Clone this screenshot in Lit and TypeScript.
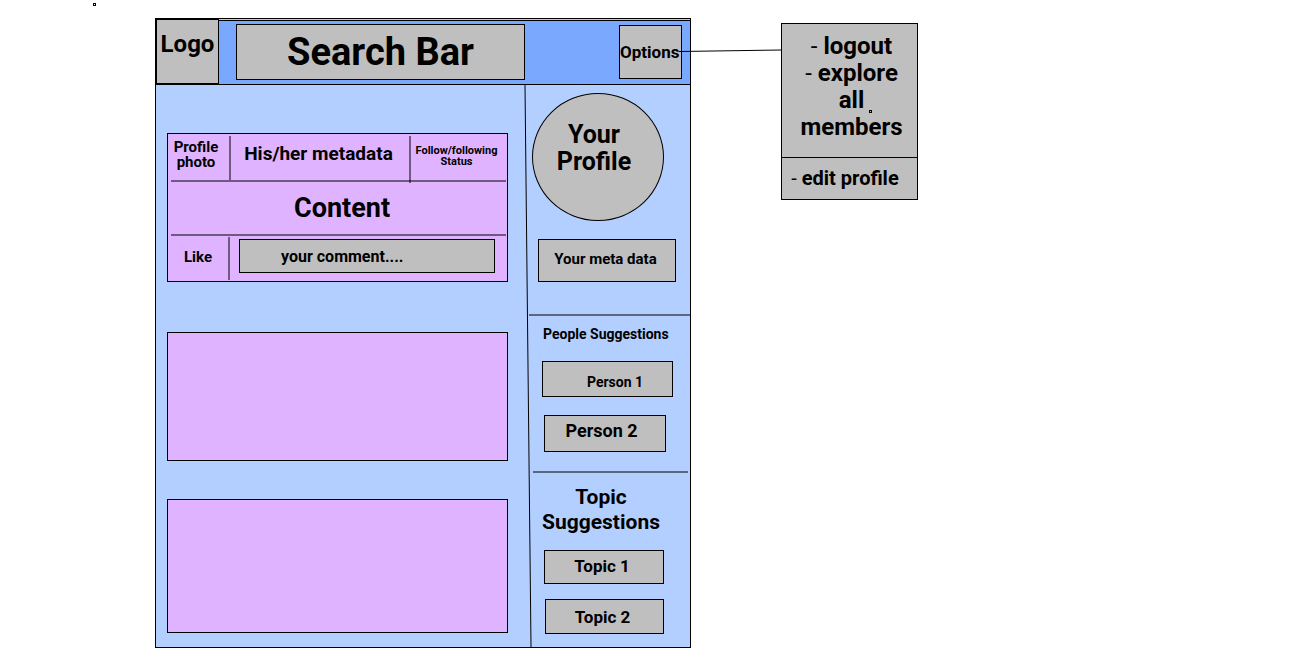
import { LitElement, html, css } from "lit";
import { customElement } from "lit/decorators.js";

const shared = css`
  *, *::before, *::after { box-sizing: border-box; }
  button, input {
    font: inherit;
    color: inherit;
    margin: 0;
    padding: 0;
    border: 1px solid #000;
    border-radius: 0;
    background: #bfbfbf;
    text-align: center;
    min-width: 0;
    outline-offset: 2px;
  }
  button { cursor: pointer; }
  h2, p { margin: 0; padding: 0; font-weight: inherit; }
`;

@customElement("post-card")
class PostCard extends LitElement {
  static styles = [shared, css`
    :host { display: block; }
    .card { border: 1px solid #000; background: #dfb3ff; padding: 2px 1px 1px 3px; }
    .meta {
      display: grid; grid-template-rows: 44px;
      grid-template-columns: minmax(0, 58fr) 2px minmax(0, 178fr) 2px minmax(0, 95fr);
    }
    .bar { background: rgba(0, 0, 0, 0.5); }
    .bar.long { height: 47px; }
    .rule { height: 2px; background: rgba(0, 0, 0, 0.5); }
    .photo { font-size: 15px; line-height: 15px; text-align: center; padding: 4px 8px 0 0; }
    .name { font-size: 19px; line-height: 36px; text-align: center; white-space: nowrap; padding-right: 3px; }
    .status { font-size: 11px; line-height: 11px; text-align: center; padding: 9px 4px 0 0; }
    .content { font-size: 27px; line-height: 52px; text-align: center; padding-left: 7px; }
    .actions { display: grid; grid-template-columns: minmax(0, 57fr) 2px minmax(0, 276fr); height: 44px; padding-top: 1px; }
    .like { border: 0; background: none; font-size: 15px; line-height: 20px; padding: 0 3px 3px 0; }
    .comment { font-size: 16px; height: 34px; margin: 2px 11px 0 9px; text-align: left; padding-left: 41px; }
  `];

  render() {
    return html`
      <article class="card">
        <div class="meta">
          <p class="photo">Profile photo</p>
          <span class="bar"></span>
          <p class="name">His/her metadata</p>
          <span class="bar long"></span>
          <p class="status">Follow/following Status</p>
        </div>
        <div class="rule"></div>
        <p class="content">Content</p>
        <div class="rule"></div>
        <div class="actions">
          <button class="like">Like</button>
          <span class="bar"></span>
          <input class="comment" aria-label="Comment" value="your comment...." />
        </div>
      </article>
    `;
  }
}

@customElement("side-panel")
class SidePanel extends LitElement {
  static styles = [shared, css`
    :host { display: block; padding: 8px 0 13px; }
    .side { display: flex; flex-direction: column; }
    .avatar {
      aspect-ratio: 33 / 32; margin-right: 26px; border-radius: 50%;
      font-size: 25px; line-height: 27px; padding: 0 24px 18px 16px;
    }
    .data { height: 43px; margin: 18px 14px 0 6px; font-size: 15px; padding: 0 3px 4px 0; }
    .rule { height: 2px; background: rgba(0, 0, 0, 0.5); }
    .rule.first { margin: 32px 0 8px -3px; }
    .rule.second { margin: 19px 2px 12px 1px; }
    .people { font-size: 14px; line-height: 20px; text-align: center; margin: 0 24px 17px 11px; white-space: nowrap; }
    .topics { font-size: 21px; line-height: 25px; text-align: center; margin: 0 30px 15px 10px; }
    .one { height: 36px; margin: 0 17px 18px 10px; font-size: 14px; padding: 6px 0 0 15px; }
    .two { height: 37px; margin: 0 24px 0 12px; font-size: 18px; padding: 0 7px 6px 0; }
    .topic { height: 34px; margin: 0 26px 15px 12px; font-size: 17px; padding: 0 4px 2px 0; }
    .topic.last { height: 35px; margin-bottom: 0; margin-left: 13px; padding-bottom: 0; }
  `];

  render() {
    return html`
      <aside class="side">
        <button class="avatar">Your Profile</button>
        <button class="data">Your meta data</button>
        <div class="rule first"></div>
        <h2 class="people">People Suggestions</h2>
        <button class="one">Person 1</button>
        <button class="two">Person 2</button>
        <div class="rule second"></div>
        <h2 class="topics">Topic Suggestions</h2>
        <button class="topic">Topic 1</button>
        <button class="topic last">Topic 2</button>
      </aside>
    `;
  }
}

@customElement("options-menu")
class OptionsMenu extends LitElement {
  static styles = [shared, css`
    :host { display: block; position: relative; }
    .menu { border: 1px solid #000; background: #bfbfbf; }
    .item { display: block; width: 100%; border: 0; font-size: 24px; line-height: 27px; padding: 0 12px 0 16px; }
    .group { padding: 9px 0 16px; border-bottom: 1px solid #000; }
    .edit { font-size: 20px; line-height: 41px; padding: 0 9px 0 0; white-space: nowrap; }
    .dash { font-weight: 400; }
    .handle { position: absolute; left: 88px; top: 87px; width: 3px; height: 3px; border: 1px solid #000; }
  `];

  render() {
    return html`
      <nav class="menu" aria-label="Options">
        <div class="group">
          <button class="item"><span class="dash">-</span> logout</button>
          <button class="item"><span class="dash">-</span> explore all members</button>
        </div>
        <button class="item edit"><span class="dash">-</span> edit profile</button>
      </nav>
      <span class="handle"></span>
    `;
  }
}

@customElement("app-root")
class AppRoot extends LitElement {
  static styles = [shared, css`
    :host {
      display: grid;
      position: relative;
      grid-template-columns: minmax(0, 155fr) minmax(0, 536fr) minmax(0, 90fr) minmax(0, 137fr) minmax(0, 379fr);
      align-items: start;
      padding: 18px 0 21px;
      background: #fff;
      color: #000;
      font-family: Roboto, "Liberation Sans", sans-serif;
      font-weight: 700;
    }
    .handle { position: absolute; left: 93px; top: 3px; width: 3px; height: 3px; border: 1px solid #000; }
    .board { grid-column: 2; border: 1px solid #000; background: #b3cfff; }
    .header { display: grid; grid-template-columns: 63px minmax(0, 1fr); border-bottom: 1px solid #000; }
    .logo {
      height: 65px; border: 1px solid #000; background: #bfbfbf; color: inherit;
      font-size: 24px; line-height: 48px; text-align: center; text-decoration: none;
    }
    .tools {
      display: grid; grid-template-columns: minmax(0, 289fr) minmax(0, 94fr) minmax(0, 63fr); align-items: center;
      margin-top: 1px; border-top: 1px solid #000; padding: 0 8px 1px 17px; background: #7ba8ff;
    }
    .search { height: 56px; font-size: 38px; width: 100%; }
    .options { grid-column: 3; height: 54px; font-size: 17px; padding-right: 2px; }
    .body { display: grid; grid-template-columns: minmax(0, 369fr) 7px minmax(0, 158fr); }
    .feed { display: flex; flex-direction: column; padding: 48px 17px 14px 11px; }
    .blank { border: 1px solid #000; background: #dfb3ff; }
    .blank.upper { height: 129px; margin: 50px 0 38px; }
    .blank.lower { height: 134px; }
    .divider { width: 7px; height: 100%; display: block; overflow: visible; }
    .link { position: relative; height: 66px; }
    .wire { position: absolute; left: -12px; top: 31px; width: calc(100% + 12px); height: 3px; }
    .menu { grid-column: 4; margin-top: 5px; }
  `];

  render() {
    return html`
      <span class="handle"></span>
      <main class="board">
        <header class="header">
          <a class="logo" href="#">Logo</a>
          <div class="tools">
            <input class="search" aria-label="Search" value="Search Bar" />
            <button class="options">Options</button>
          </div>
        </header>
        <div class="body">
          <section class="feed">
            <post-card></post-card>
            <article class="blank upper"></article>
            <article class="blank lower"></article>
          </section>
          <svg class="divider" viewBox="0 0 7 562" preserveAspectRatio="none" aria-hidden="true">
            <path d="M0 0 L6 562" stroke="#000" fill="none" vector-effect="non-scaling-stroke" />
          </svg>
          <side-panel></side-panel>
        </div>
      </main>
      <div class="link">
        <svg class="wire" viewBox="0 0 102 3" preserveAspectRatio="none" aria-hidden="true">
          <path d="M0 2.5 L102 1" stroke="#000" fill="none" vector-effect="non-scaling-stroke" />
        </svg>
      </div>
      <options-menu class="menu"></options-menu>
    `;
  }
}
